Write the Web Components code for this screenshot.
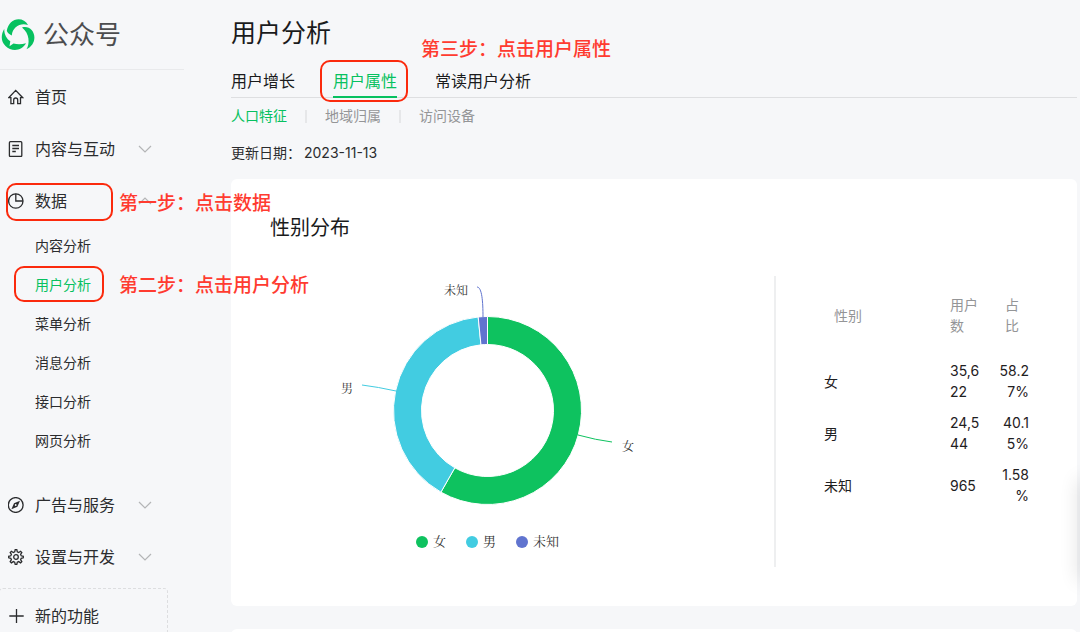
<!DOCTYPE html>
<html lang="zh-CN">
<head>
<meta charset="utf-8">
<title>公众号 - 用户分析</title>
<style>
html {
  scrollbar-width: none;
}
body {
  margin: 0;
  background: #f6f7f9;
  color: #2b2c2e;
  font-family: Inter, "Noto Sans CJK SC", sans-serif;
  font-size: 14px;
  line-height: 20px;
}
</style>
</head>
<body>
<mp-app>
  <mp-sidebar slot="side">
    <mp-nav-item icon="home">首页</mp-nav-item>
    <mp-nav-item icon="doc" arrow="down">内容与互动</mp-nav-item>
    <mp-nav-item icon="pie" arrow="up">数据</mp-nav-item>
    <mp-submenu items="内容分析,用户分析,菜单分析,消息分析,接口分析,网页分析" active="用户分析"></mp-submenu>
    <mp-nav-item icon="compass" arrow="down">广告与服务</mp-nav-item>
    <mp-nav-item icon="gear" arrow="down">设置与开发</mp-nav-item>
    <mp-nav-item icon="plus" slot="extra">新的功能</mp-nav-item>
  </mp-sidebar>
  <mp-page-head heading="用户分析" date="2023-11-13"></mp-page-head>
  <mp-card heading="性别分布">
    <mp-donut></mp-donut>
    <mp-gender-table slot="aside"></mp-gender-table>
  </mp-card>
  <mp-card></mp-card>
  <mp-steps slot="over"></mp-steps>
</mp-app>

<script>
const ICONS = {
  home: `<path d="M.7 8.700 7.700 1.400l7 7.300H12.500v6H9.700V11a2 2 0 0 0-4 0v3.700H2.900v-6z"/>`,
  doc: `<rect x="1.400" y=".7" width="12.400" height="14.800" rx="1"/><path d="M4.300 4.500h6.700M4.300 7.500h6.700M4.300 10.500h3.500"/>`,
  pie: `<circle cx="7.800" cy="8" r="7.200"/><path d="M7.800.800V8H15"/>`,
  compass: `<circle cx="7.700" cy="8" r="7.400"/><path d="M12 3.700 9.400 9.700 3.400 12.300l2.600-6z" fill="currentColor" stroke="none"/><circle cx="7.700" cy="8" r=".9" fill="#f6f7f9" stroke="none"/>`,
  gear: `<path d="M6.700 2.900 7.200.700h1.600l.5 2.200 1.400.6 1.900-1.200 1.200 1.200-1.200 1.900.6 1.400 2.100.500v1.500l-2.100.5-.6 1.400 1.200 1.900-1.200 1.200-1.900-1.200-1.400.6-.5 2.200H7.200l-.5-2.200-1.400-.6-1.900 1.200-1.200-1.200 1.200-1.900-.6-1.400L.7 8.800V7.300l2.100-.5.6-1.400-1.200-1.900 1.200-1.200 1.900 1.200z"/><circle cx="8" cy="8" r="2.300"/>`,
  plus: `<path d="M8.500 1v14M1.300 8h14.400"/>`
};

/**
 * Attach an open shadow root filled with the given markup
 */
function render(el, html) {
  const template = document.createElement("template");
  template.innerHTML = html;
  el.attachShadow({ mode: "open" }).appendChild(template.content.cloneNode(true));
}

class MpApp extends HTMLElement {
  connectedCallback() {
    render(this, `
<style>
:host {
  display: flex;
  position: relative;
  height: 100vh;
  min-height: 600px;
  overflow: hidden;
}
aside {
  flex: 0 0 184px;
}
main {
  flex: 1;
  min-width: 0;
  padding: 15px 3px 0 47px;
}
</style>
<aside><slot name="side"></slot></aside>
<main><slot></slot></main>
<slot name="over"></slot>`);
  }
}

class MpSidebar extends HTMLElement {
  connectedCallback() {
    render(this, `
<style>
:host {
  display: block;
}
header {
  display: flex;
  align-items: center;
  gap: 8px;
  height: 69px;
  border-bottom: 1px solid #e9eaec;
  color: #4c4d4f;
  font-size: 26px;
  line-height: 36px;
}
header svg {
  width: 34px;
  height: 34px;
  margin-left: 1px;
}
nav {
  padding-top: 1px;
}
.extra {
  margin: 5px 16px 0 -1px;
  padding-top: 1px;
  border: 1px dashed #dddee0;
  border-radius: 4px;
}
</style>
<header>
  <svg viewBox="0 0 34 34" fill="#07c160" aria-hidden="true">
    <path d="M5.800 12.800C7 5.500 12 1.200 17.500 1.200c4 0 7.500 2 9.500 5.800C19.500 4.300 11.500 9 10.800 17.500 8.300 16.500 6.500 15 5.800 12.800z"/>
    <path d="M21 9.500C27.500 7.300 33.400 12.500 33.400 19.500c0 5-3 9.500-7.900 11.800C29 25.500 28.600 15.500 21 9.500z"/>
    <path d="M3.300 10.800C-.3 17-.2 23.500 4.500 28 10.500 34 21 33 25 25.300c-4 1.200-8.500 1.400-12.500.3l-4 2.700.8-5C5.500 20.500 3 16 3.300 10.800z"/>
  </svg>
  <span>公众号</span>
</header>
<nav>
  <slot></slot>
  <div class="extra"><slot name="extra"></slot></div>
</nav>`);
  }
}

class MpNavItem extends HTMLElement {
  connectedCallback() {
    const arrow = this.getAttribute("arrow");
    const d = arrow === "up" ? "M1 7l6-6 6 6" : "M1 1l6 6 6-6";
    render(this, `
<style>
:host {
  display: block;
}
button {
  display: flex;
  align-items: center;
  width: 100%;
  height: 52px;
  padding: 0 32px 0 8px;
  border: 0;
  background: none;
  color: inherit;
  font: inherit;
  font-size: 16px;
  line-height: 24px;
  text-align: left;
}
.icon {
  width: 16px;
  height: 16px;
  margin-right: 11px;
  fill: none;
  stroke: currentColor;
  stroke-width: 1.3;
}
span {
  flex: 1;
}
.arrow {
  width: 14px;
  height: 8px;
  fill: none;
  stroke: #b4b5b7;
  stroke-width: 1.2;
}
</style>
<button type="button">
  <svg class="icon" viewBox="0 0 16 16" aria-hidden="true">${ICONS[this.getAttribute("icon")]}</svg>
  <span><slot></slot></span>
  ${arrow ? `<svg class="arrow" viewBox="0 0 14 8" aria-hidden="true"><path d="${d}"/></svg>` : ""}
</button>`);
  }
}

class MpSubmenu extends HTMLElement {
  connectedCallback() {
    const active = this.getAttribute("active");
    const items = this.getAttribute("items").split(",");
    render(this, `
<style>
:host {
  display: block;
  margin-top: -1px;
  padding-bottom: 19px;
}
a {
  display: block;
  padding-left: 35px;
  color: inherit;
  line-height: 39px;
  text-decoration: none;
}
a.active {
  color: #07c160;
}
</style>
${items.map(item => `<a href="#"${item === active ? ' class="active"' : ""}>${item}</a>`).join("")}`);
  }
}

class MpPageHead extends HTMLElement {
  connectedCallback() {
    render(this, `
<style>
:host {
  display: block;
  margin-bottom: 16px;
}
h1 {
  margin: 0 0 18px;
  color: #1a1b1c;
  font-size: 25px;
  font-weight: 400;
  line-height: 36px;
}
a {
  color: inherit;
  text-decoration: none;
}
.tabs {
  display: flex;
  gap: 38px;
  border-bottom: 1px solid #dedfe1;
  color: #1a1b1c;
  font-size: 16px;
  line-height: 24px;
}
.tabs a {
  margin-bottom: -1px;
  padding-bottom: 3px;
  border-bottom: 2px solid transparent;
}
.tabs .active {
  border-color: #07c160;
}
.active {
  color: #07c160;
}
.subtabs {
  display: flex;
  align-items: center;
  gap: 18px;
  margin-top: 8px;
  color: #949597;
}
.subtabs i {
  width: 2px;
  height: 13px;
  background: #e6e7e9;
}
p {
  display: flex;
  gap: 3px;
  margin: 17px 0 0;
}
</style>
<h1>${this.getAttribute("heading")}</h1>
<nav class="tabs">
  <a href="#">用户增长</a>
  <a href="#" class="active">用户属性</a>
  <a href="#">常读用户分析</a>
</nav>
<nav class="subtabs">
  <a href="#" class="active">人口特征</a><i></i>
  <a href="#">地域归属</a><i></i>
  <a href="#">访问设备</a>
</nav>
<p><span>更新日期：</span><time>${this.getAttribute("date")}</time></p>`);
  }
}

class MpCard extends HTMLElement {
  connectedCallback() {
    const heading = this.getAttribute("heading");
    render(this, `
<style>
:host {
  display: block;
  margin-bottom: 23px;
  padding: 35px 0 39px;
  border-radius: 6px;
  background: #fff;
}
h2 {
  margin: 0 0 34px;
  padding-left: 39px;
  color: #1a1b1c;
  font-size: 20px;
  font-weight: 400;
  line-height: 28px;
}
.row {
  display: flex;
}
.row > div {
  flex: 1;
  min-width: 0;
}
section {
  padding: 0 48px;
  border-left: 2px solid #eeeff0;
}
</style>
${heading ? `<h2>${heading}</h2>
<div class="row">
  <div><slot></slot></div>
  <section><slot name="aside"></slot></section>
</div>` : ""}`);
  }
}

const CX = 256.5;
const CY = 134.5;
const SLICES = [
  { name: "女", share: 0.5825, color: "#0ec25f", line: "M347 159Q365 164 381 166", x: 391, y: 175 },
  { name: "男", share: 0.4017, color: "#42cce1", line: "M165 115Q147 111 131 109", x: 110, y: 117 },
  { name: "未知", share: 0.0158, color: "#6074cf", line: "M252 41C252 26 251 11 246 11", x: 213, y: 19 }
];

class MpDonut extends HTMLElement {
  connectedCallback() {
    let angle = 0;
    const parts = SLICES.map(s => {
      const path = this.slicePath(angle, angle + s.share * 2 * Math.PI, 94, 66);
      angle += s.share * 2 * Math.PI;
      return `<path d="${path}" fill="${s.color}" stroke="#fff"/>
<path d="${s.line}" fill="none" stroke="${s.color}"/>
<text x="${s.x}" y="${s.y}">${s.name}</text>`;
    });

    render(this, `
<style>
:host {
  display: block;
  padding: 0 30px 11px 0;
  color: #333;
  font-family: "Liberation Serif", "Noto Serif CJK SC", "Noto Sans CJK SC", serif;
}
svg {
  display: block;
  width: 100%;
  height: 252px;
}
text {
  fill: #333;
  font-size: 12px;
}
ul {
  display: flex;
  justify-content: center;
  gap: 20px;
  margin: 0;
  padding: 0;
  font-size: 13px;
  line-height: 28px;
  list-style: none;
}
li {
  display: flex;
  align-items: center;
  gap: 5px;
}
i {
  width: 12px;
  height: 12px;
  border-radius: 50%;
}
</style>
<svg viewBox="0 0 513 252" role="img" aria-label="性别分布">${parts.join("")}</svg>
<ul>${SLICES.map(s => `<li><i style="background:${s.color}"></i>${s.name}</li>`).join("")}</ul>`);
  }

  slicePath(from, to, outer, inner) {
    const at = (r, a) => `${(CX + r * Math.sin(a)).toFixed(2)} ${(CY - r * Math.cos(a)).toFixed(2)}`;
    const large = to - from > Math.PI ? 1 : 0;
    return `M${at(outer, from)}A${outer} ${outer} 0 ${large} 1 ${at(outer, to)}` +
      `L${at(inner, to)}A${inner} ${inner} 0 ${large} 0 ${at(inner, from)}Z`;
  }
}

class MpGenderTable extends HTMLElement {
  connectedCallback() {
    const rows = [["女", "35,622", "58.27%"], ["男", "24,544", "40.15%"], ["未知", "965", "1.58%"]];
    render(this, `
<style>
:host {
  display: block;
}
table {
  width: 205px;
  table-layout: fixed;
  border-collapse: collapse;
  color: #1f2022;
  line-height: 21px;
  overflow-wrap: anywhere;
}
th, td {
  padding: 5px 0;
  font-weight: 400;
  text-align: left;
}
th {
  padding: 18px 0 19px;
  color: #949597;
}
th:first-child {
  width: 116px;
  padding-left: 10px;
}
th:nth-child(2) {
  width: 34px;
}
th:nth-child(2), td:nth-child(2) {
  padding-right: 15px;
}
th:last-child {
  padding-right: 10px;
}
th:last-child, td:last-child {
  text-align: right;
}
</style>
<table>
  <thead><tr><th>性别</th><th>用户数</th><th>占比</th></tr></thead>
  <tbody>${rows.map(r => `<tr>${r.map(c => `<td>${c}</td>`).join("")}</tr>`).join("")}</tbody>
</table>`);
  }
}

/**
 * Tutorial marks laid over the page
 */
class MpSteps extends HTMLElement {
  connectedCallback() {
    render(this, `
<style>
:host {
  position: absolute;
  inset: 0;
  overflow: hidden;
  pointer-events: none;
}
.box, .note, .dock {
  position: absolute;
  box-sizing: border-box;
}
.box {
  border: 2px solid #fb2a0d;
  border-radius: 10px;
}
.note {
  color: #ff3b30;
  font-size: 19px;
  font-weight: 500;
  line-height: 28px;
  white-space: nowrap;
}
.dock {
  top: 480px;
  right: -12px;
  width: 12px;
  height: 100px;
  box-shadow: 0 0 20px rgba(0, 0, 0, .16);
}
</style>
<div class="box" style="left:6px;top:183px;width:107px;height:38px"></div>
<div class="note" style="left:119px;top:190px">第一步：点击数据</div>
<div class="box" style="left:14px;top:266px;width:90px;height:36px"></div>
<div class="note" style="left:119px;top:272px">第二步：点击用户分析</div>
<div class="box" style="left:320px;top:60px;width:88px;height:42px"></div>
<div class="note" style="left:421px;top:36px">第三步：点击用户属性</div>
<div class="dock"></div>`);
  }
}

customElements.define("mp-app", MpApp);
customElements.define("mp-sidebar", MpSidebar);
customElements.define("mp-nav-item", MpNavItem);
customElements.define("mp-submenu", MpSubmenu);
customElements.define("mp-page-head", MpPageHead);
customElements.define("mp-card", MpCard);
customElements.define("mp-donut", MpDonut);
customElements.define("mp-gender-table", MpGenderTable);
customElements.define("mp-steps", MpSteps);
</script>
</body>
</html>
